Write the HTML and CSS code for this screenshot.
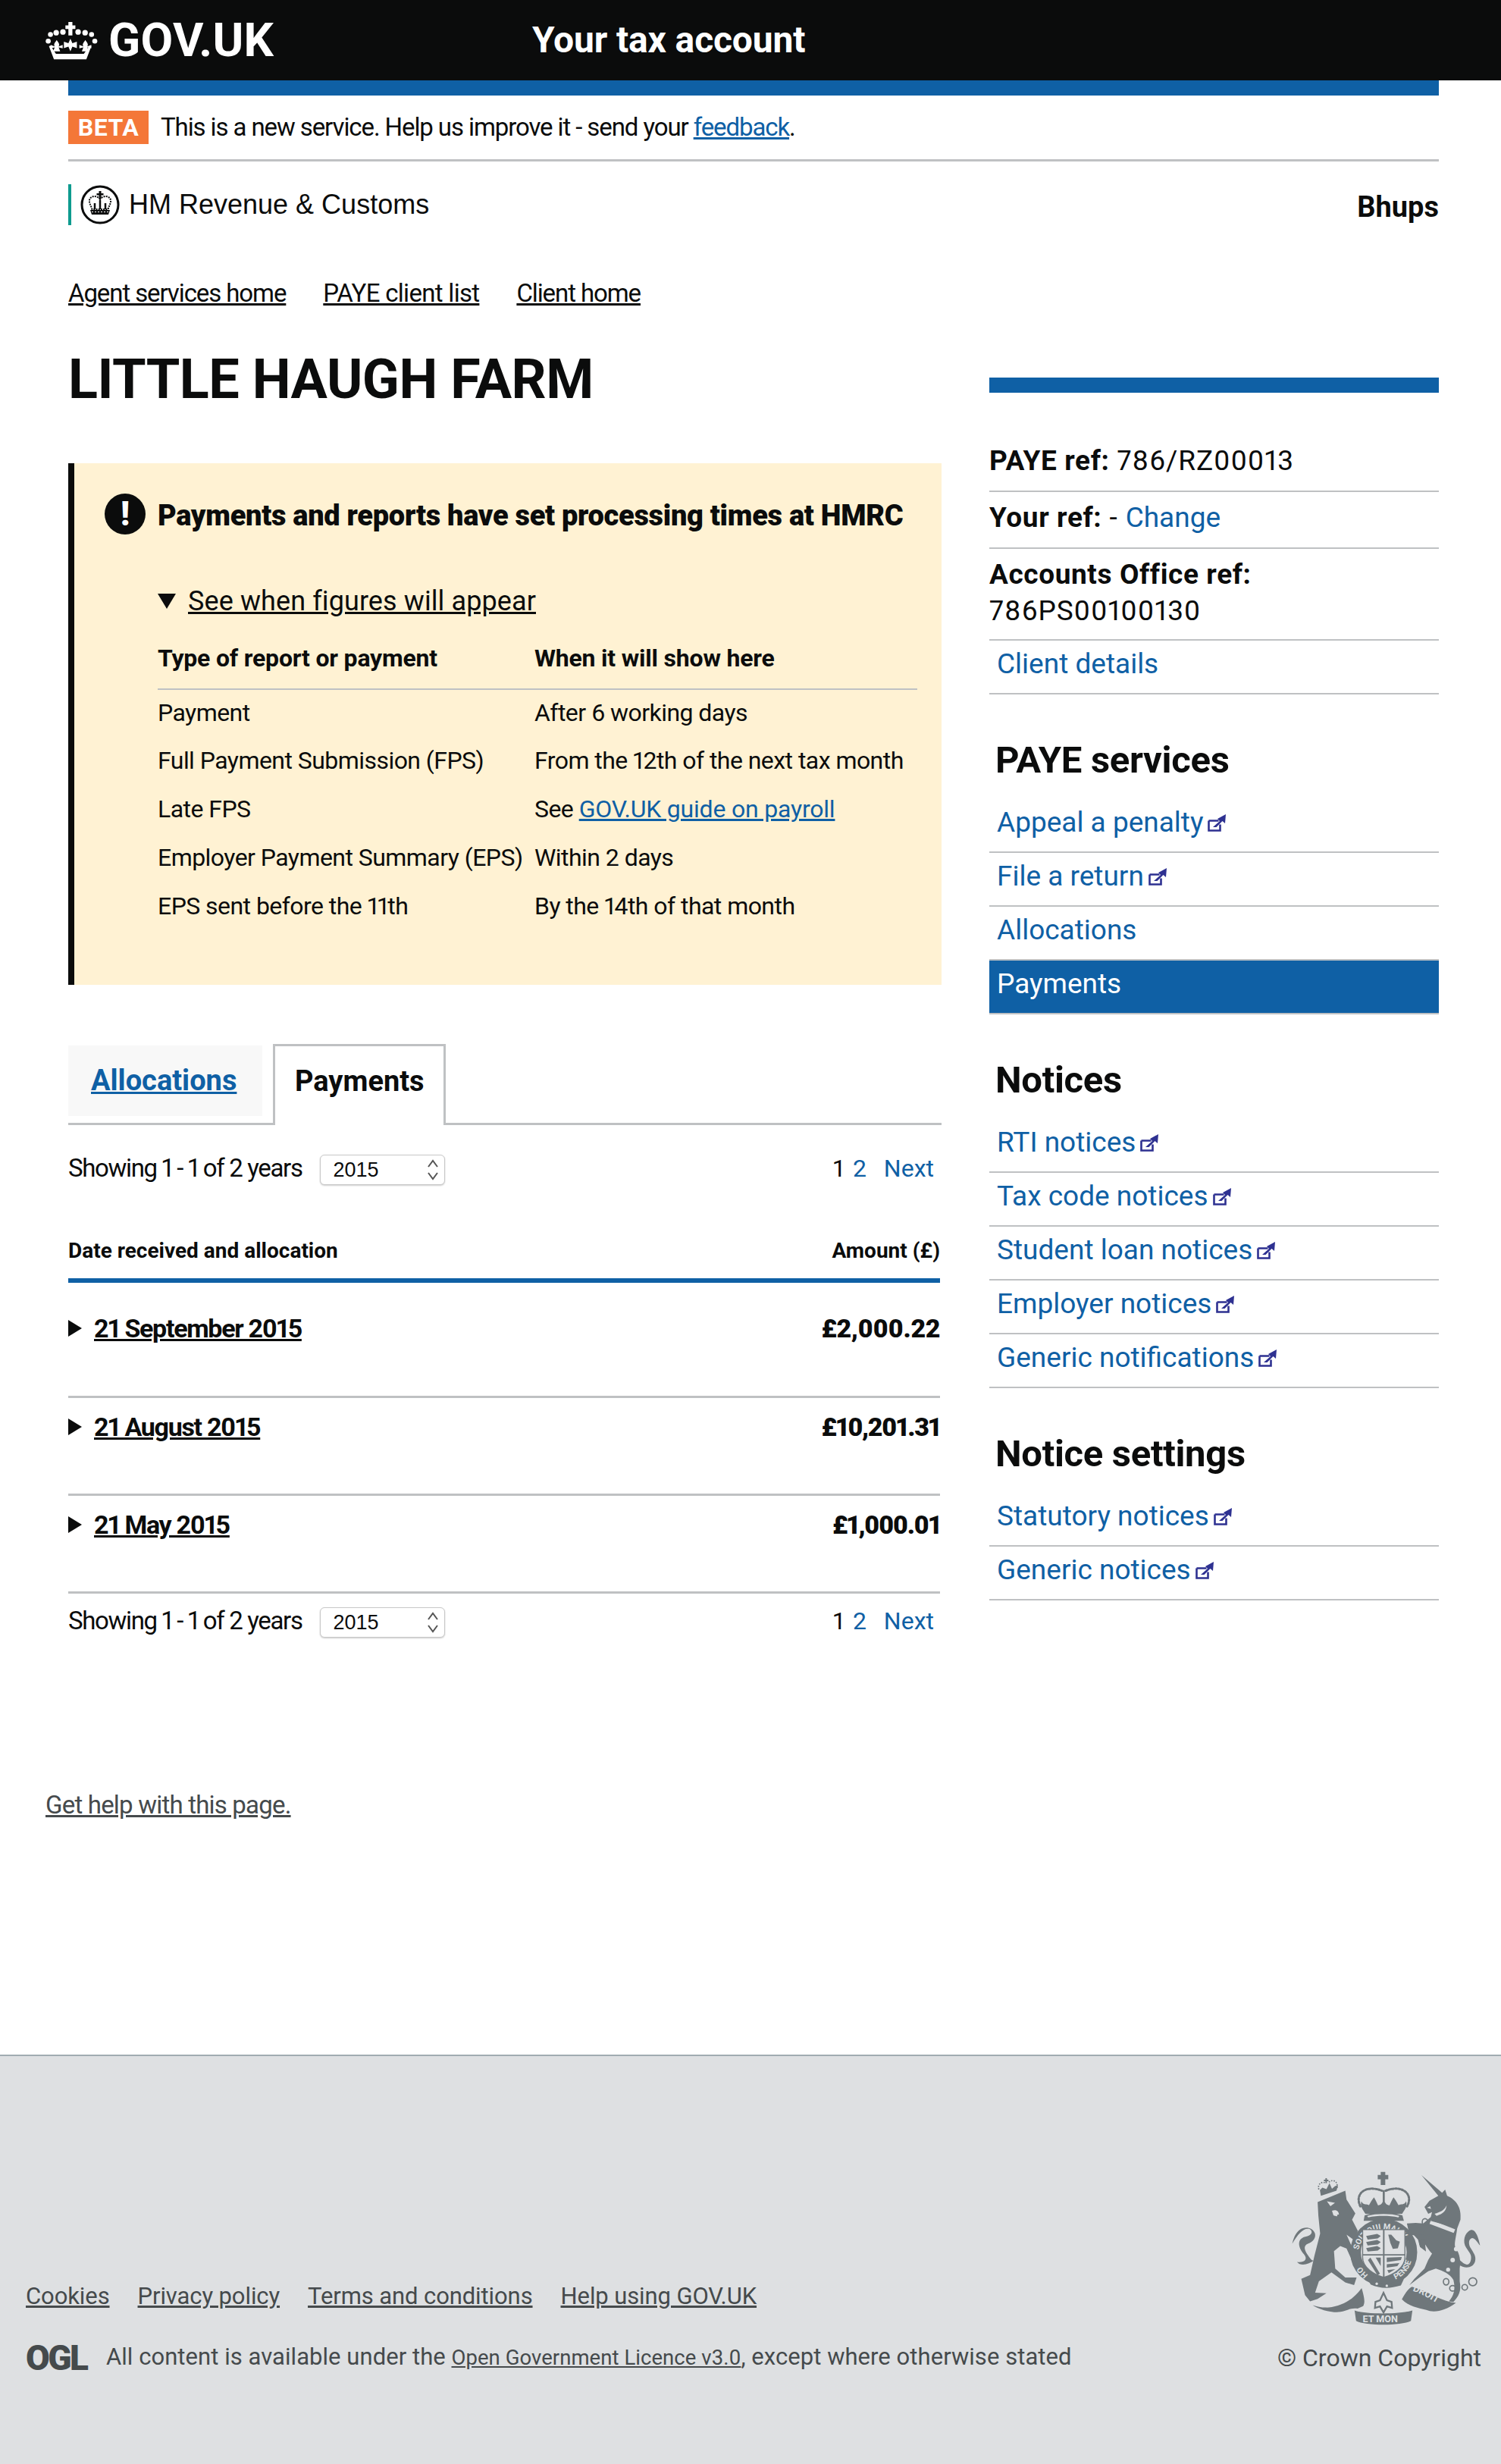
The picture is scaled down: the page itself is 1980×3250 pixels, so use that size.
FILE: index.html
```html
<!DOCTYPE html>
<html lang="en">
<head>
<meta charset="utf-8">
<title>Your tax account - GOV.UK</title>
<link rel="stylesheet" href="styles.css">
</head>
<body>
<svg class="defs" width="0" height="0" aria-hidden="true">
  <symbol id="ext" viewBox="0 0 24 24">
    <path d="M1.500 9.500h13M1.500 9.500v13h15v-8" fill="none" stroke="#2e3191" stroke-width="2.600"/>
    <path d="M7 18l9-8-3-3 11-6-1 12-3.500-3-8 8z" fill="#2e3191"/>
  </symbol>
  <symbol id="chev" viewBox="0 0 16 30">
    <path d="M2 11l6-8 6 8M2 19l6 8 6-8" fill="none" stroke="#555" stroke-width="2"/>
  </symbol>
</svg>

<header class="site-header">
  <a class="logo" href="#">
    <svg class="logo-crown" viewBox="60 75 210 155" fill="#fff">
      <path d="M152 78h16v14h12v14h-12v26h-16v-26h-12v-14h12z"/>
      <circle cx="130" cy="118" r="11"/><circle cx="191" cy="118" r="11"/>
      <circle cx="103" cy="121" r="11"/><circle cx="219" cy="121" r="11"/>
      <circle cx="80" cy="128" r="10"/><circle cx="245" cy="128" r="10"/>
      <circle cx="71" cy="155" r="10"/><circle cx="258" cy="155" r="10"/>
      <path d="M105 150c6 10 14 16 8 26l16-6v14l-16-4 6 16h-28l6-16-16 4v-14l16 6c-6-10 2-16 8-26z"/>
      <path d="M220 150c6 10 14 16 8 26l16-6v14l-16-4 6 16h-28l6-16-16 4v-14l16 6c-6-10 2-16 8-26z"/>
      <path d="M160 145l8 18 18-6v26l-18-6-8 19-8-19-18 6v-26l18 6z"/>
      <path d="M80 172l22 34h112l24-34 6 3-20 53H94l-20-53z"/>
    </svg>
    <span class="logo-text">GOV.UK</span>
  </a>
  <span class="service-name">Your tax account</span>
</header>

<div class="page">
  <div class="phase-bar"></div>
  <p class="beta"><strong class="beta-tag">BETA</strong><span>This is a new service. Help us improve it - send your <a class="link" href="#">feedback</a>.</span></p>

  <div class="org-row">
    <div class="org">
      <svg class="org-crest" viewBox="0 0 52 52">
        <circle cx="26" cy="26" r="24" fill="#fff" stroke="#0b0c0c" stroke-width="3"/>
        <path d="M24.500 8h3v3h3v2.500h-3V18h-3v-4.500h-3V11h3z" fill="#0b0c0c"/>
        <path d="M26 19c-4-6-13-5-14 1-.6 4 2 7 3.500 12h21c1.500-5 4.100-8 3.500-12-1-6-10-7-14-1z" fill="none" stroke="#0b0c0c" stroke-width="2" stroke-dasharray="2 1.200"/>
        <path d="M26 20v12M19 24v8M33 24v8" stroke="#0b0c0c" stroke-width="2.500"/>
        <path d="M13 33h26l-2 6H15z" fill="#0b0c0c"/>
        <path d="M15 35.500h22" stroke="#fff" stroke-width="1" stroke-dasharray="2 2"/>
      </svg>
      <span class="org-name">HM Revenue &amp; Customs</span>
    </div>
    <strong class="user-name">Bhups</strong>
  </div>

  <nav class="crumbs">
    <a href="#">Agent services home</a>
    <a class="crumb-wide" href="#">PAYE client list</a>
    <a href="#">Client home</a>
  </nav>

  <div class="columns">
    <main class="main-col">
      <h1 class="page-title">LITTLE HAUGH FARM</h1>

      <section class="panel">
        <div class="panel-head">
          <span class="warn-icon">!</span>
          <strong class="panel-title">Payments and reports have set processing times at HMRC</strong>
        </div>
        <div class="panel-summary"><span class="tri-down"></span><a href="#">See when figures will appear</a></div>
        <table class="times">
          <thead>
            <tr><th>Type of report or payment</th><th>When it will show here</th></tr>
          </thead>
          <tbody>
            <tr><td>Payment</td><td>After 6 working days</td></tr>
            <tr><td>Full Payment Submission (FPS)</td><td>From the 12th of the next tax month</td></tr>
            <tr><td>Late FPS</td><td>See <a class="link guide" href="#">GOV.UK guide on payroll</a></td></tr>
            <tr><td>Employer Payment Summary (EPS)</td><td>Within 2 days</td></tr>
            <tr><td>EPS sent before the 11th</td><td>By the 14th of that month</td></tr>
          </tbody>
        </table>
      </section>

      <ul class="tabs">
        <li class="tab"><a class="link" href="#">Allocations</a></li>
        <li class="tab tab-active">Payments</li>
      </ul>

      <div class="pager pager-top">
        <div class="pager-left"><span>Showing 1 - 1 of 2 years</span>
          <span class="select-wrap"><select class="year-select"><option>2015</option></select><svg class="select-chev"><use href="#chev"/></svg></span>
        </div>
        <div class="pager-right"><span>1</span><a href="#">2</a><a class="next" href="#">Next</a></div>
      </div>

      <div class="pay-head"><span>Date received and allocation</span><span>Amount (£)</span></div>
      <div class="pay-row pay-first"><a href="#"><span class="tri-right"></span><u>21 September 2015</u></a><strong>£2,000.22</strong></div>
      <div class="pay-row"><a href="#"><span class="tri-right"></span><u>21 August 2015</u></a><strong class="amt-narrow">£10,201.31</strong></div>
      <div class="pay-row"><a href="#"><span class="tri-right"></span><u>21 May 2015</u></a><strong class="amt-narrow">£1,000.01</strong></div>

      <div class="pager pager-bottom">
        <div class="pager-left"><span>Showing 1 - 1 of 2 years</span>
          <span class="select-wrap"><select class="year-select"><option>2015</option></select><svg class="select-chev"><use href="#chev"/></svg></span>
        </div>
        <div class="pager-right"><span>1</span><a href="#">2</a><a class="next" href="#">Next</a></div>
      </div>
    </main>

    <aside class="side-col">
      <div class="side-bar"></div>
      <div class="info-row"><strong>PAYE ref:</strong> 786/RZ00013</div>
      <div class="info-row"><strong>Your ref:</strong> - <a class="side-link change" href="#">Change</a></div>
      <div class="info-row info-double"><strong>Accounts Office ref:</strong><br>786PS00100130</div>
      <a class="side-item" href="#">Client details</a>

      <h2 class="side-head">PAYE services</h2>
      <a class="side-item" href="#">Appeal a penalty<svg class="ext"><use href="#ext"/></svg></a>
      <a class="side-item" href="#">File a return<svg class="ext"><use href="#ext"/></svg></a>
      <a class="side-item" href="#">Allocations</a>
      <a class="side-item side-active" href="#">Payments</a>

      <h2 class="side-head">Notices</h2>
      <a class="side-item" href="#">RTI notices<svg class="ext"><use href="#ext"/></svg></a>
      <a class="side-item" href="#">Tax code notices<svg class="ext"><use href="#ext"/></svg></a>
      <a class="side-item" href="#">Student loan notices<svg class="ext"><use href="#ext"/></svg></a>
      <a class="side-item" href="#">Employer notices<svg class="ext"><use href="#ext"/></svg></a>
      <a class="side-item" href="#">Generic notifications<svg class="ext"><use href="#ext"/></svg></a>

      <h2 class="side-head">Notice settings</h2>
      <a class="side-item" href="#">Statutory notices<svg class="ext"><use href="#ext"/></svg></a>
      <a class="side-item" href="#">Generic notices<svg class="ext"><use href="#ext"/></svg></a>
    </aside>
  </div>
</div>

<a class="help" href="#">Get help with this page.</a>

<footer class="site-footer">
  <div class="foot-left">
    <div class="foot-links">
      <a href="#">Cookies</a><a href="#">Privacy policy</a><a href="#">Terms and conditions</a><a href="#">Help using GOV.UK</a>
    </div>
    <div class="licence"><span class="ogl">OGL</span><span>All content is available under the <a href="#">Open Government Licence v3.0</a>, except where otherwise stated</span></div>
  </div>
  <div class="foot-right">
    <svg class="crest" viewBox="130 90 755 615" fill="#6f777b">
      <!-- lion -->
      <path d="M235 215L345 170L350 205L385 260L372 285L395 330L378 365L350 345L392 440L375 455L350 400L325 390L300 410L305 480L345 515L390 515L380 545L345 535L290 495L240 530L225 575L270 578L235 600L205 610L185 585L170 520L205 505L222 430L245 340L238 270Z"/>
      <path d="M225 445c-28 20-58 26-72 8 25 4 46-8 28-30-24-26-30-62 5-70 26-4 32-20 18-30-24-8-46 18-70 58 5-20 10-40 30-56 20-14 50-10 60 14 6 18-8 36-28 42-18 8-14 24-2 42 14 20 20 30 31 22z"/>
      <path d="M272 212l32 6-18 14zM292 250c12-6 26-2 28 14l-8 2c4 8-4 6-14 2z" fill="#dee0e2"/>
      <!-- lion crown -->
      <path d="M248 190l62-20 6-22-12 4-12 10-10-22-12 24-16-6-10 10z"/>
      <path d="M260 126h6v-6h6v6h6v6h-6v8h-6v-8h-6z"/>
      <g fill="none" stroke="#6f777b" stroke-width="5" stroke-dasharray="5 5"><path d="M240 165c-8-22 16-36 28-24M280 136c12-12 38-8 32 26"/></g>
      <!-- royal crown -->
      <path d="M486 95h18v12h12v18h-12v22h-18v-22h-12v-18h12z"/>
      <path d="M425 262c-10-18-22-28-16-50 8 18 22 8 30 16 6-12 14-24 20-32 6 10 12 22 16 32 10-2 14-4 19-14v-46h8v46c5 10 9 12 19 14 4-10 10-22 16-32 6 8 14 20 20 32 8-8 22 2 30-16 6 22-6 32-16 50z"/>
      <path d="M422 268c40-14 106-14 150 0l6 22H418z"/>
      <path d="M432 270c36-10 96-10 128 0l-4 6c-36-8-84-8-120 0z" fill="#dee0e2"/>
      <g fill="none" stroke="#6f777b" stroke-width="9" stroke-dasharray="7 6" stroke-linecap="round"><path d="M405 232c-24-48 18-88 86-62M505 170c68-26 112 14 86 62"/></g>
      <!-- garter -->
      <circle cx="498" cy="415" r="112" fill="none" stroke="#6f777b" stroke-width="42"/>
      <path id="garter-top" d="M396 425a102 102 0 0 1 204 0" fill="none"/>
      <path id="garter-right" d="M510 530a104 104 0 0 0 100-105" fill="none"/>
      <path id="garter-left" d="M436 505a104 104 0 0 1-34-50" fill="none"/>
      <text class="crest-text" fill="#dee0e2"><textPath href="#garter-top" startOffset="6%">SOIT QUI MAL Y</textPath></text>
      <text class="crest-text" fill="#dee0e2"><textPath href="#garter-right" startOffset="22%">PENSE</textPath></text>
      <text class="crest-text" fill="#dee0e2"><textPath href="#garter-left" startOffset="0%">HO</textPath></text>
      <!-- shield -->
      <path d="M414 325h168v110c0 42-46 68-84 80-38-12-84-38-84-80z" fill="#dee0e2" stroke="#6f777b" stroke-width="4"/>
      <path d="M498 325v190M414 425h168" stroke="#6f777b" stroke-width="6"/>
      <g fill="#6f777b">
        <path d="M428 350l44-8 14 8-12 10-40 4zM428 374l44-8 14 8-12 10-40 4zM428 398l44-8 14 8-12 10-40 4z"/>
        <path d="M516 345h12l20 22 14 6-8 26-20 2-10-24z"/>
        <path d="M510 436l60-2-4 12-56 8zM510 462l50-4-8 12-42 6zM512 486l32-4-26 16z"/>
        <path d="M445 436l38 64-10 6-38-60zM466 436l20 34v-34z"/>
      </g>
      <!-- buckle -->
      <path d="M430 515c40 28 92 32 148 6l-12 26c-46 14-84 12-120-4z"/>
      <circle cx="470" cy="540" r="5" fill="#dee0e2"/><circle cx="510" cy="548" r="5" fill="#dee0e2"/>
      <!-- unicorn -->
      <path d="M648 108L730 178L742 165L750 190C785 205 808 235 803 285L790 320C785 360 775 385 785 400C800 420 805 450 800 480L800 530C808 570 795 590 775 612L757 610C775 590 785 565 775 525C760 500 735 490 705 480L675 490L640 515L600 545L620 520L660 480L675 445L690 420C670 400 650 360 640 350L600 345L590 300L625 298L655 300L685 275L690 255L675 262L660 235L680 210L715 190Z"/>
      <path d="M612 340l46 6 8 66-24-18-8-30z"/>
      <path d="M682 232l-12 6 16 4z" fill="#dee0e2"/>
      <path d="M700 262c20-6 40-14 48-34-2 22-14 34-40 42z" fill="#dee0e2"/>
      <g fill="#dee0e2"><circle cx="786" cy="402" r="9"/><circle cx="772" cy="446" r="9"/><circle cx="754" cy="484" r="8"/></g>
      <path d="M686 286l96 38-6 14-96-36z" fill="#dee0e2"/>
      <path d="M690 286l10-12 8 12 10-14 10 16 12-12 6 18 14-8 4 16 14-2-6 14-94-26z"/>
      <path d="M795 440c30 34 46 28 50 2 4-22-14-32-24-54-10-30 6-56 24-62 18-4 30 30 36 62-10-12-20-30-32-30-14 4-14 20-8 36 14 24 26 36 20 58-8 26-40 30-66 12z"/>
      <g fill="none" stroke="#6f777b" stroke-width="5">
        <ellipse cx="746" cy="532" rx="11" ry="13"/><ellipse cx="772" cy="558" rx="12" ry="11"/><ellipse cx="820" cy="554" rx="11" ry="11"/><circle cx="852" cy="532" r="16"/>
        <ellipse cx="662" cy="294" rx="11" ry="13"/><ellipse cx="652" cy="378" rx="11" ry="13"/>
      </g>
      <!-- motto -->
      <path d="M215 625c70 26 150-4 195-68 12 40 14 58 6 72l-22 10c-30-6-50 14-84 14-30 0-70-12-95-28z"/>
      <path d="M382 646c40 16 180 16 230 0l-6 42c-40 20-180 20-218 0z"/>
      <path d="M570 602c16-30 30-46 40-50 70 20 120 60 175 64-40 30-86 42-118 28-34-8-70-14-97-42z"/>
      <path id="motto-left" d="M268 634c40-4 70-20 100-56" fill="none"/>
      <path id="motto-right" d="M612 568c40 12 80 40 126 66" fill="none"/>
      <text class="motto" fill="#dee0e2"><textPath href="#motto-left">DIEU</textPath></text>
      <text class="motto" fill="#dee0e2"><textPath href="#motto-right">DROIT</textPath></text>
      <text class="motto" x="414" y="692" fill="#dee0e2">ET MON</text>
      <path d="M497 576l14 30 18 6 2 24-20-6-14 24-14-24-20 6 2-24 18-6z" fill="none" stroke="#6f777b" stroke-width="7"/>
    </svg>
    <span class="copyright">© Crown Copyright</span>
  </div>
</footer>
</body>
</html>
```
FILE: styles.css
```css
:root { --blue: #0f60a5; }
* { box-sizing: border-box; }
html, body { margin: 0; padding: 0; }
body {
  background: #fff;
  color: #0b0c0c;
  font-family: Roboto, "Liberation Sans", sans-serif;
  font-size: 33px;
  letter-spacing: -1.1px;
  line-height: 48px;
  font-variant-numeric: proportional-nums;
}
a { color: inherit; }
.defs { position: absolute; }
.link { color: var(--blue); }

.site-header {
  background: #0b0c0c;
  color: #fff;
  height: 106px;
  display: flex;
  align-items: center;
  letter-spacing: 0;
}
.logo {
  display: flex;
  align-items: center;
  width: 702px;
  padding-left: 60px;
  text-decoration: none;
}
.logo-crown { width: 69px; height: 51px; }
.logo-text { font-size: 62px; font-weight: 700; margin-left: 14px; line-height: 60px; letter-spacing: 0.3px; }
.service-name { font-size: 48px; font-weight: 700; letter-spacing: -0.15px; }

.page { margin: 0 82px 0 90px; }
.phase-bar { height: 20px; background: var(--blue); }
.beta {
  display: flex;
  align-items: center;
  margin: 0;
  height: 87px;
  border-bottom: 3px solid #bfc1c3;
}
.beta-tag {
  background: #f47738;
  color: #fff;
  width: 106px;
  height: 44px;
  line-height: 44px;
  text-align: center;
  font-size: 32px;
  letter-spacing: 0.5px;
  margin-right: 16px;
}
.org-row {
  display: flex;
  justify-content: space-between;
  align-items: center;
  margin-top: 30px;
  height: 54px;
}
.org {
  display: flex;
  align-items: center;
  border-left: 4px solid #0e9b8f;
  height: 54px;
  padding-left: 12px;
}
.org-crest { width: 52px; height: 52px; }
.org-name { font-family: "Liberation Sans", Arial, sans-serif; font-size: 36px; margin-left: 12px; letter-spacing: 0; }
.user-name { font-weight: 700; position: relative; top: 3px; font-size: 38px; letter-spacing: 0; }

.crumbs { display: flex; gap: 49px; margin-top: 66px; height: 48px; }
.crumb-wide { letter-spacing: -0.7px; }
.columns { display: grid; grid-template-columns: 1152px 593px; column-gap: 63px; }

.page-title { font-size: 72px; line-height: 80px; font-weight: 700; margin: 50px 0 70px; letter-spacing: -0.5px; }

.panel {
  background: #fff2d3;
  border-left: 8px solid #0b0c0c;
  height: 688px;
  padding: 40px 30px 0 40px;
}
.panel-head { display: flex; align-items: center; gap: 16px; font-size: 38px; letter-spacing: -0.3px; font-weight: 700; height: 54px; }
.panel-title { padding-top: 3px; }
.warn-icon {
  width: 54px; height: 54px; border-radius: 50%;
  background: #0b0c0c; color: #fff;
  display: flex; align-items: center; justify-content: center;
  font-size: 44px; font-weight: 900; flex: none;
}
.panel-summary { margin: 64px 0 0 70px; font-size: 36px; letter-spacing: 0.1px; display: flex; align-items: center; gap: 16px; height: 48px; }
.tri-down { width: 0; height: 0; border-left: 12px solid transparent; border-right: 12px solid transparent; border-top: 20px solid #0b0c0c; }
.times { border-collapse: collapse; margin: 27px 0 0 70px; width: 1002px; font-size: 32px; letter-spacing: -0.55px; }
.times th { text-align: left; font-weight: 700; height: 46px; padding: 0 0 16px; border-bottom: 2px solid #bfc1c3; letter-spacing: -0.2px; }
.times th:first-child, .times td:first-child { width: 497px; }
.times td { height: 64px; padding: 0 0 4px; white-space: nowrap; }
.guide { letter-spacing: -0.2px; }

.tabs { list-style: none; margin: 78px 0 0; padding: 0; display: flex; align-items: flex-start; border-bottom: 3px solid #bfc1c3; height: 107px; letter-spacing: 0; }
.tab { background: #f8f8f8; width: 256px; height: 93px; margin-top: 2px; font-size: 38px; font-weight: 700; padding: 22px 0 0 30px; }
.tab-active { background: #fff; border: 3px solid #bfc1c3; border-bottom: 0; width: 228px; height: 107px; margin: 0 0 0 14px; padding: 22px 0 0 26px; }

.pager { display: flex; justify-content: space-between; align-items: center; height: 48px; letter-spacing: -1.35px; }
.pager-top { margin-top: 33px; }
.pager-bottom { margin-top: 12px; }
.pager-left { display: flex; align-items: center; gap: 23px; }
.pager-right { display: flex; gap: 12px; padding-right: 10px; color: #0b0c0c; font-size: 32px; letter-spacing: 0; }
.pager-right a { color: var(--blue); text-decoration: none; }
.pager-right .next { margin-left: 11px; }
.select-wrap { position: relative; display: block; height: 40px; width: 165px; margin-top: 4px; }
.year-select {
  appearance: none;
  display: block;
  width: 165px; height: 40px;
  background: #fff;
  border: 1px solid #c8c8c8;
  border-radius: 6px;
  box-shadow: 0 1px 2px rgba(0,0,0,.2);
  font-family: "Liberation Sans", Arial, sans-serif;
  font-size: 27px;
  letter-spacing: 0;
  padding: 0 0 0 17px;
  color: #0b0c0c;
}
.select-chev { position: absolute; right: 8px; top: 5px; width: 16px; height: 30px; }

.pay-head {
  display: flex; justify-content: space-between;
  font-size: 28px; letter-spacing: 0; font-weight: 700;
  margin: 61px 2px 0 0;
  height: 60px;
  border-bottom: 6px solid var(--blue);
  box-sizing: content-box;
}
.pay-row {
  display: flex; justify-content: space-between;
  padding: 14px 0 64px;
  margin-right: 2px;
  border-bottom: 3px solid #bfc1c3;
  font-size: 34px;
  letter-spacing: -0.4px;
  font-weight: 700;
}
.pay-first { padding-top: 36px; padding-bottom: 65px; }
.amt-narrow { letter-spacing: -1.500px; }
.pay-row a { display: flex; align-items: center; text-decoration: none; letter-spacing: -1.300px; }
.tri-right { width: 0; height: 0; border-top: 11px solid transparent; border-bottom: 11px solid transparent; border-left: 18px solid #0b0c0c; margin-right: 16px; }

.side-col { font-size: 37px; letter-spacing: 0; }
.side-bar { height: 20px; background: var(--blue); margin: 87px 0 56px; }
.info-row { border-bottom: 2px solid #bfc1c3; padding: 10px 0 15px; letter-spacing: 0.9px; }
.info-row strong { letter-spacing: 0.6px; }
.info-double { padding-bottom: 13px; }
.side-link { color: var(--blue); text-decoration: none; letter-spacing: 0; }
.side-item {
  display: flex; align-items: center;
  height: 71px;
  padding: 0 10px 7px;
  border-bottom: 2px solid #bfc1c3;
  color: var(--blue);
  text-decoration: none;
}
.side-active { background: var(--blue); color: #fff; }
.ext { width: 24px; height: 24px; margin-left: 6px; }
.side-head { font-size: 49px; letter-spacing: -0.3px; line-height: 50px; font-weight: 700; margin: 0; padding: 62px 0 26px 8px; height: 138px; }

.help { display: block; margin: 195px 0 0 60px; color: #454a4c; width: max-content; letter-spacing: -0.8px; }

.site-footer {
  margin-top: 305px;
  height: 540px;
  background: #dee0e2;
  border-top: 2px solid #a1acb2;
  color: #454a4c;
  display: flex;
  justify-content: space-between;
  align-items: flex-end;
  padding: 0 26px 116px 34px;
  letter-spacing: 0;
}
.site-footer a { color: #454a4c; }
.foot-links { display: flex; gap: 37px; margin-bottom: 32px; font-size: 31px; letter-spacing: -0.1px; }
.licence { display: flex; align-items: center; gap: 20px; font-size: 31px; letter-spacing: 0.05px; }
.licence a { font-size: 27.5px; }
.ogl { font-weight: 900; font-size: 46px; letter-spacing: -2.500px; line-height: 34px; color: #454a4c; width: 86px; }
.foot-right { display: flex; flex-direction: column; align-items: flex-end; }
.crest { width: 251px; height: 204px; margin-bottom: 19px; }
.crest-text { font-family: Roboto, sans-serif; font-weight: 700; font-size: 32px; }
.motto { font-family: Roboto, sans-serif; font-weight: 700; font-size: 38px; }
.copyright { font-size: 32px; }
```
